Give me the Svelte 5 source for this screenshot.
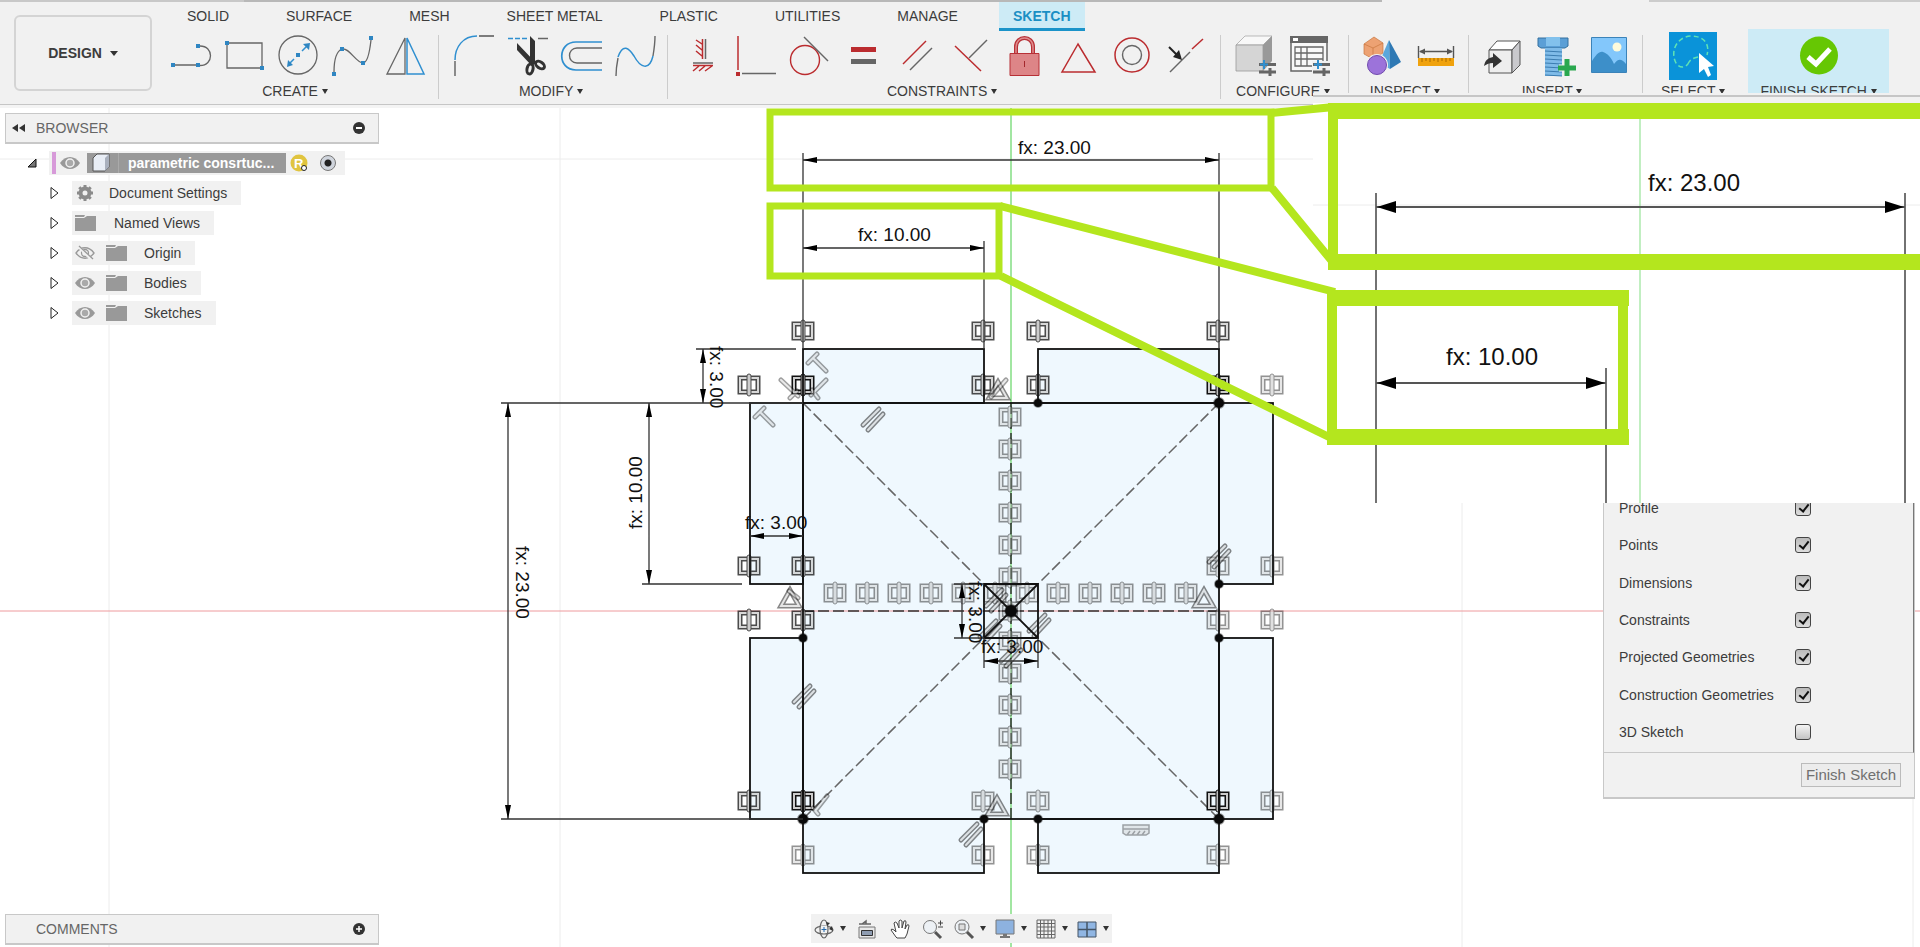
<script lang="ts">
    type Row = { label: string; icon: string; eye?: string };
    type Arrow = { x: number; y: number; r: number };

    const tabs = ["SOLID", "SURFACE", "MESH", "SHEET METAL", "PLASTIC", "UTILITIES", "MANAGE", "SKETCH"];

    const groups = [
        { label: "CREATE", kind: "", tools: ["line", "rectangle", "circle", "spline", "mirror"] },
        { label: "MODIFY", kind: "", tools: ["fillet", "trim", "offset", "curve"] },
        { label: "CONSTRAINTS", kind: "", tools: ["fix", "perpendicular", "tangent", "equal", "parallel", "collinear", "lock", "polygon", "concentric", "midpoint"] },
        { label: "CONFIGURE", kind: "roomy", tools: ["configure", "table"] },
        { label: "INSPECT", kind: "small", tools: ["shapes", "measure"] },
        { label: "INSERT", kind: "small", tools: ["derive", "bolt", "image"] },
        { label: "SELECT", kind: "select", tools: ["select"] },
        { label: "FINISH SKETCH", kind: "finish", tools: ["finish"] }
    ];

    const rows: Row[] = [
        { label: "Document Settings", icon: "gear" },
        { label: "Named Views", icon: "folder" },
        { label: "Origin", icon: "folder", eye: "hidden" },
        { label: "Bodies", icon: "folder", eye: "eye" },
        { label: "Sketches", icon: "folder", eye: "eye" }
    ];

    let options = $state([
        { label: "Profile", on: true },
        { label: "Points", on: true },
        { label: "Dimensions", on: true },
        { label: "Constraints", on: true },
        { label: "Projected Geometries", on: true },
        { label: "Construction Geometries", on: true },
        { label: "3D Sketch", on: false }
    ]);

    const nav = [
        { name: "orbit", label: "Orbit", menu: true },
        { name: "look", label: "Look At", menu: false },
        { name: "pan", label: "Pan", menu: false },
        { name: "zoom", label: "Zoom", menu: false },
        { name: "window", label: "Zoom Window", menu: true },
        { name: "display", label: "Display Settings", menu: true },
        { name: "grid", label: "Grid and Snaps", menu: true },
        { name: "panes", label: "Viewports", menu: true }
    ];

    const tools: Record<string, string> = {
        line: `<path d="M2 30H27M29 30.500C43 30.500 43 11 29 11" fill="none" stroke="#666" stroke-width="1.300"/><path d="M0 28h4v4h-4zM25 28h4v4h-4zM25 9h4v4h-4z" fill="#2f86c2"/>`,
        rectangle: `<path d="M2 8H37V33H2z" fill="none" stroke="#666" stroke-width="1.300"/><path d="M0 6h4v4h-4zM35 31h4v4h-4z" fill="#2f86c2"/>`,
        circle: `<circle cx="19" cy="20" r="19" fill="none" stroke="#666" stroke-width="1.300"/><path d="M10 29L15 24M23 16L28 11" stroke="#2f8fd0" stroke-width="1.500"/><path d="M8 32l1-7 5 5zM31 8l-1 7-6-6zM17 18h4v4h-4z" fill="#2f86c2"/>`,
        spline: `<path d="M1 37C1 24 4 16 9 14C16 12 23 28 30 28C35 28 37 14 38 5" fill="none" stroke="#666" stroke-width="1.300"/><path d="M-1 37h4v4h-4zM7 12h4v4h-4zM28 26h4v4h-4zM36 1h4v4h-4z" fill="#2f86c2"/>`,
        mirror: `<path d="M0 39L18 3V39z" fill="none" stroke="#666" stroke-width="1.300"/><path d="M20 3L37 39H20z" fill="none" stroke="#2f8fd0" stroke-width="1.500"/>`,
        fillet: `<path d="M1 25C1 12 9 1 23 1" fill="none" stroke="#2f8fd0" stroke-width="1.500"/><path d="M1 26V41M25 1H40" stroke="#555" stroke-width="1.300"/>`,
        trim: `<path d="M0 3.500H20" stroke="#2f8fd0" stroke-width="1.500" stroke-dasharray="5 2"/><path d="M30 3.500H40" stroke="#666" stroke-width="1.500"/><path d="M9 8L28 28L24 31L9 15zM22 1L27 6V29L22 25z" fill="#333"/><ellipse cx="22" cy="34" rx="3" ry="5" fill="none" stroke="#333" stroke-width="3" transform="rotate(12 22 34)"/><ellipse cx="32" cy="30" rx="5" ry="3" fill="none" stroke="#333" stroke-width="3" transform="rotate(35 32 30)"/>`,
        offset: `<path d="M40 7H14C-5 7-5 35 14 35H40" fill="none" stroke="#2f8fd0" stroke-width="1.700"/><path d="M40 13H15C5 13 5 28 15 28H40" fill="none" stroke="#666" stroke-width="1.400"/>`,
        curve: `<path d="M0 41C0 34 1 28 2 23M37 21C38 15 39 8 39 1" fill="none" stroke="#666" stroke-width="1.400"/><path d="M2 22C7 8 13 13 18 21C24 32 33 37 37 21" fill="none" stroke="#2f8fd0" stroke-width="1.500"/>`,
        fix: `<path d="M10 28H30M22.500 4V24" stroke="#666" stroke-width="1.500"/><path d="M10 30.500H30M19.500 4V24M19 9L13 5M19 15L13 10M19 21L13 16M16 31L10 36M22 31L16 36M29 31L22 36" stroke="#bb2c2f" stroke-width="1.500"/>`,
        perpendicular: `<path d="M1 1V35" stroke="#bb2c2f" stroke-width="1.500"/><path d="M5 38.500H39" stroke="#666" stroke-width="1.500"/><path d="M-1 37h4v4h-4z" fill="#bb2c2f"/>`,
        tangent: `<circle cx="14" cy="25" r="14.500" fill="none" stroke="#bb2c2f" stroke-width="1.400"/><path d="M13 2L37 26" stroke="#666" stroke-width="1.400"/>`,
        equal: `<path d="M6 12h25v5h-25z" fill="#bb2c2f"/><path d="M6 24h25v5h-25z" fill="#666"/>`,
        parallel: `<path d="M4 29L27 6" stroke="#bb2c2f" stroke-width="1.400"/><path d="M11 35L33 13" stroke="#666" stroke-width="1.400"/>`,
        collinear: `<path d="M2 11L28 36" stroke="#bb2c2f" stroke-width="1.500"/><path d="M16 23L34 5" stroke="#666" stroke-width="1.400"/>`,
        lock: `<path d="M9 18V12C9 0 26 0 26 12V18" fill="none" stroke="#b73036" stroke-width="4"/><path d="M9 18V12C9 0 26 0 26 12V18" fill="none" stroke="#df8c8e" stroke-width="1.500"/><path d="M3 18.500h29v22h-29z" fill="#dd8587" stroke="#b73036"/><path d="M17.500 26v6" stroke="#a3272c"/>`,
        polygon: `<path d="M17 9L1 37H34z" fill="none" stroke="#bb2c2f" stroke-width="1.500"/>`,
        concentric: `<circle cx="17" cy="20" r="17" fill="none" stroke="#bb2c2f" stroke-width="1.500"/><circle cx="17" cy="20" r="9.500" fill="none" stroke="#666" stroke-width="1.400"/>`,
        midpoint: `<path d="M1 37L21 17" stroke="#666" stroke-width="1.400"/><path d="M23 14L34 4" stroke="#bb2c2f" stroke-width="1.500"/><path d="M0 12L8 20" stroke="#222" stroke-width="2"/><path d="M13 25L10 15L4 22z" fill="#222"/>`,
        configure: `<path d="M0 10L9 1H36L27 10z" fill="#f8f8f8" stroke="#aaa" stroke-width=".800"/><path d="M0 10H27V36H0z" fill="#d5d5d5" stroke="#999" stroke-width=".800"/><path d="M27 10L36 1V26L27 36z" fill="#999"/><path d="M23 29.500H40M23 37H40M34 33V41" stroke="#666" stroke-width="3"/><path d="M28 25V34M24 29.500H32" stroke="#2f8fd0" stroke-width="2"/>`,
        table: `<path d="M1 2H37V36H1z" fill="#f8f8f8" stroke="#666" stroke-width="1.500"/><path d="M0 1h38v7h-38z" fill="#666"/><path d="M3 3h5v3h-5z" fill="#fff"/><path d="M5 12H33V31H5zM5 18H33M5 24H33M11 12V31M17 12V31" fill="none" stroke="#666" stroke-width="1.300"/><path d="M22 26h19v14h-19z" fill="#f1f1f1"/><path d="M23 29.500H40M23 37H40M34 33V41" stroke="#666" stroke-width="3"/><path d="M28 25V34M24 29.500H32" stroke="#2f8fd0" stroke-width="2"/>`,
        shapes: `<path d="M2 9L12 2L21 8V18L11 24L2 19z" fill="#eda273" stroke="#c9773f" stroke-width=".700"/><path d="M2 9L11 13L21 8M11 13V24" fill="none" stroke="#c9773f" stroke-width=".700"/><path d="M27 5L17 28L28 34z" fill="#5ba7dc"/><path d="M27 5L39 27L28 34z" fill="#2f79b4"/><circle cx="15" cy="30" r="11" fill="#f1f1f1"/><circle cx="15" cy="30" r="9.500" fill="#9c73da" stroke="#714bad"/>`,
        measure: `<path d="M2.500 11V23M37.500 11V23M4 16.500H36" stroke="#555" stroke-width="1.400"/><path d="M3 16.500l6-3v6zM37 16.500l-6-3v6z" fill="#555"/><path d="M2 23h36v8h-36z" fill="#f0a20d"/><path d="M6 23v4M10 23v3M14 23v4M18 23v3M22 23v4M26 23v3M30 23v4M34 23v3" stroke="#a96a00"/>`,
        derive: `<path d="M7 15L15 6H38L30 15z" fill="#fff" stroke="#555" stroke-width="1"/><path d="M7 15H30V38H7z" fill="#eee" stroke="#555"/><path d="M30 15L38 6V30L30 38z" fill="#c9c9cd" stroke="#555"/><path d="M2 31C3 25 6 23 11 22V18L20 26L11 33V28C7 28 5 29 2 31z" fill="#333"/>`,
        bolt: `<path d="M2 3h30v8l-3 2h-24l-3-2z" fill="#5b9fd6" stroke="#34719f"/><path d="M10 2h14v9h-14z" fill="#82c1ec"/><path d="M9 13h17v28h-17z" fill="#7fbbe8"/><path d="M9 16l17 1M9 20l17 1M9 24l17 1M9 28l17 1M9 32l17 1M9 36l17 1M9 40l17 1" stroke="#3b7cb0"/><path d="M31 25V41M23 33H39" stroke="#f1f1f1" stroke-width="7"/><path d="M31 24V41M22 33H40" stroke="#2aa84f" stroke-width="5"/>`,
        image: `<path d="M1.500 2.500h35v35h-35z" fill="#83c7fb" stroke="#3b83b9"/><circle cx="27" cy="12" r="4.500" fill="#fdfbdc"/><path d="M2 26C6 20 9 16 13 17C18 19 21 22 24 29C28 24 31 23 36 29V37H2z" fill="#3d8fc9"/>`,
        select: `<path d="M-4-3h48v48h-48z" fill="#0a93d9"/><path d="M16 27C13 34 6 33 3 28C-3 17 3 2 18 1C31 1 37 9 34 20M25 22C21 23 18 24 16 27" fill="none" stroke="#5fe3b4" stroke-width="1.500" stroke-dasharray="5 3"/><path d="M26 18L26 38L31 34L35 42L38 40L35 32L41 31z" fill="#fff"/>`,
        finish: `<circle cx="20" cy="20.500" r="19" fill="#66c703"/><path d="M9 22L17 29L31 14" fill="none" stroke="#fff" stroke-width="5"/>`
    };

    const small: Record<string, string> = {
        gear: `<circle cx="10" cy="10" r="4.500" fill="none" stroke="#8b8b8b" stroke-width="4"/><path d="M10 2V4M10 16V18M2 10H4M16 10H18M4.300 4.300L6 6M14 14L15.700 15.700M4.300 15.700L6 14M14 6L15.700 4.300" stroke="#8b8b8b" stroke-width="3"/>`,
        folder: `<path d="M0 2h10l-1 2h-9zM0 5h9l3-2h9v15h-21z" fill="#999"/>`,
        eye: `<path d="M0 10C5 2 15 2 20 10C15 18 5 18 0 10z" fill="#999"/><circle cx="10" cy="10" r="4" fill="#aaa" stroke="#f1f1f1" stroke-width="1.500"/>`,
        hidden: `<path d="M1 10C6 3 14 3 19 10C14 17 6 17 1 10z" fill="none" stroke="#999" stroke-width="1.300"/><circle cx="10" cy="10" r="3.500" fill="none" stroke="#999" stroke-width="1.300"/><path d="M4 4L17 17" stroke="#f1f1f1" stroke-width="3"/><path d="M4 3L18 16" stroke="#999" stroke-width="1.300"/>`,
        orbit: `<g fill="none" stroke="#666" stroke-width="1.200"><ellipse cx="10" cy="10" rx="4" ry="9"/><ellipse cx="10" cy="11" rx="9" ry="4"/></g><path d="M7 7h6v7h-6z" fill="#f1f1f1"/><path d="M10 8v5M7.500 10.500h5" stroke="#256bb0"/><path d="M12 3l4 1-3 3zM18 7l1 5-4-2z" fill="#333"/>`,
        look: `<path d="M2 8h16v11h-16z" fill="#e9e9e9" stroke="#777"/><path d="M4.500 11.500h11v5h-11z" fill="#8f9db2" stroke="#333"/><path d="M2 5h12M5 5l4-3v3" fill="none" stroke="#666" stroke-width="1.500"/>`,
        pan: `<path d="M6 18L1 11Q1 9 4 11L6 13L4 4Q5 2 7 4L9 9V2Q10 0 12 2L12 9L14 2Q16 1 16 3L15 10L17 6Q19 5 19 7L17 15L15 19H7z" fill="#fff" stroke="#444"/>`,
        zoom: `<circle cx="7" cy="8" r="6.500" fill="#edf1f5" stroke="#777"/><path d="M12 13L18 19" stroke="#555" stroke-width="3"/><path d="M15 4h5M17.500 1.500v5M15 8h5" stroke="#444"/>`,
        window: `<circle cx="8" cy="8" r="7" fill="#edf1f5" stroke="#777"/><path d="M5 5h6v6h-6z" fill="#ddd" stroke="#777"/><path d="M13 13L19 19" stroke="#555" stroke-width="3"/>`,
        display: `<path d="M1 1h18v14h-18z" fill="#8db2df" stroke="#777"/><path d="M8 15h4v2h3v2h-10v-2h3z" fill="#777"/>`,
        grid: `<path d="M1 1h18v18h-18zM4.500 1v18M8 1v18M12 1v18M15.500 1v18M1 4.500h18M1 8h18M1 12h18M1 15.500h18" fill="none" stroke="#666"/>`,
        panes: `<path d="M1 3h18v15h-18z" fill="#90b6e3" stroke="#456"/><path d="M10 3v15M1 10.500h18" stroke="#456" stroke-width="1.500"/>`
    };

    // closed profiles, as x, y, width, height
    const profiles = [
        [803, 349, 181, 54], [1038, 349, 181, 54],
        [803, 819, 181, 54], [1038, 819, 181, 54],
        [750, 403, 53, 181], [750, 638, 53, 181],
        [1219, 403, 54, 181], [1219, 638, 54, 181],
        [803, 403, 416, 416]
    ];

    const soft = 0.45;
    const medium = 0.75;
    const column = [417, 449, 481, 513, 545, 577, 641, 673, 705, 737, 769];
    const line = [835, 867, 899, 931, 963, 995, 1027, 1058, 1090, 1122, 1154, 1186];

    // coincident markers, as x, y, opacity
    const markers = [
        [803, 331, medium], [983, 331, medium], [1038, 331, medium], [1218, 331, medium],
        [749, 385, medium], [803, 385, 1], [983, 385, medium], [1038, 385, medium], [1218, 385, 1], [1272, 385, soft],
        [749, 566, medium], [803, 566, medium], [1218, 566, soft], [1272, 566, soft],
        [749, 620, medium], [803, 620, medium], [1218, 620, soft], [1272, 620, soft],
        [749, 801, medium], [803, 801, 1], [983, 801, soft], [1038, 801, soft], [1218, 801, 1], [1272, 801, soft],
        [803, 855, soft], [983, 855, soft], [1038, 855, soft], [1218, 855, soft],
        ...column.map((y) => [1010, y, soft]),
        ...line.map((x) => [x, 593, soft]),
        [1010, 611, soft]
    ];

    const parallels = [[872, 419], [803, 696], [970, 834], [1218, 556], [1038, 625], [989, 631], [1010, 655], [995, 600]];
    const triangles = [[998, 390], [790, 598], [1204, 598], [997, 806]];
    const points = [
        [1038, 403, 4], [1219, 403, 5], [1219, 584, 4], [1219, 638, 4], [803, 638, 4],
        [803, 819, 5], [984, 819, 4], [1038, 819, 4], [1219, 819, 5], [1011, 611, 6]
    ];

    const glyphs = "M808 363L817 354M813 358L826 371M755 417L764 408M760 412L773 425M781 380L798 396M790 398L797 391M826 380L811 395M812 390L818 398M991 397L1006 380M789 591L798 598M816 810L827 796M813 808L818 814";

    const dims = [
        "M803 153V349M1219 153V349M803 160H1219",
        "M984 241V349M803 248H984",
        "M696 349H796M703 349V403",
        "M501 403H803M501 819H803M508 403V819",
        "M642 584H742M649 403V584",
        "M750 536H803",
        "M954 584H984M954 638H984M962 584V638",
        "M984 638V668M1038 638V668M984 661H1038"
    ].join("");

    // each tip points to the left before it is turned
    const arrows: Arrow[] = [
        { x: 803, y: 160, r: 0 }, { x: 1219, y: 160, r: 180 },
        { x: 803, y: 248, r: 0 }, { x: 984, y: 248, r: 180 },
        { x: 703, y: 349, r: 90 }, { x: 703, y: 403, r: 270 },
        { x: 508, y: 403, r: 90 }, { x: 508, y: 819, r: 270 },
        { x: 649, y: 403, r: 90 }, { x: 649, y: 584, r: 270 },
        { x: 750, y: 536, r: 0 }, { x: 803, y: 536, r: 180 },
        { x: 962, y: 584, r: 90 }, { x: 962, y: 638, r: 270 },
        { x: 984, y: 661, r: 0 }, { x: 1038, y: 661, r: 180 }
    ];

    const labels = [
        { x: 1018, y: 154, r: 0, text: "fx: 23.00" },
        { x: 858, y: 241, r: 0, text: "fx: 10.00" },
        { x: 710, y: 346, r: 90, text: "fx: 3.00" },
        { x: 516, y: 546, r: 90, text: "fx: 23.00" },
        { x: 642, y: 529, r: -90, text: "fx: 10.00" },
        { x: 745, y: 529, r: 0, text: "fx: 3.00" },
        { x: 969, y: 581, r: 90, text: "fx: 3.00" },
        { x: 981, y: 653, r: 0, text: "fx: 3.00" }
    ];
</script>

<div class="app">
    <svg class="canvas" viewBox="0 0 1920 947" preserveAspectRatio="xMinYMin slice" role="img" aria-label="Sketch">
        <path class="gridline" d="M109 108V947M560 108V947M1462 503V947M1913 503V947M0 159H1313"/>
        {#each profiles as [x, y, w, h]}
            <rect {x} {y} width={w} height={h} fill="#eff8fe"/>
        {/each}
        <path d="M0 611H1920" stroke="#ee9a9d"/>
        <path d="M1011 108V947" stroke="#83de83" stroke-width="1.500"/>
        <path class="construction" d="M803 403L984 584M1219 403L1038 584M803 819L984 638M1219 819L1038 638"/>
        <path class="construction axis" d="M803 611H1219M1011 403V819"/>

        {#each markers as [x, y, opacity]}
            <g transform="translate({x} {y})" {opacity}>
                <path class="outer" d="M-1-7H-9V7H-1M1-7H9V7H1"/>
                <path class="inner" d="M-1-7H-9V7H-1M1-7H9V7H1"/>
                <rect x="-2" y="-11" width="4" height="22" rx="2" fill="#bbb" stroke="#111"/>
            </g>
        {/each}
        {#each parallels as [x, y]}
            <g transform="translate({x} {y})" opacity="0.500">
                <path class="outer" d="M-9 6L7-10M-4 11L11-5"/>
                <path class="inner" d="M-9 6L7-10M-4 11L11-5"/>
            </g>
        {/each}
        {#each triangles as [x, y]}
            <g transform="translate({x} {y})" opacity="0.500">
                <path class="outer" d="M0-8L-9 8H9z"/>
                <path class="inner" d="M0-8L-9 8H9z"/>
            </g>
        {/each}
        <g opacity="0.400">
            <path class="outer" d={glyphs}/>
            <path class="inner" d={glyphs}/>
            <path d="M1123 825h26v8l-3 2h-20l-3-2zM1123 829h26M1127 835l3-4M1132 835l3-4M1137 835l3-4M1142 835l3-4" fill="#ccc" stroke="#222" stroke-width="1.500"/>
        </g>

        {#each profiles as [x, y, w, h]}
            <rect {x} {y} width={w} height={h} fill="none" stroke="#111" stroke-width="1.800"/>
        {/each}
        <path d="M984 584H1038V638H984zL1038 638M1038 584L984 638" fill="none" stroke="#111" stroke-width="1.800"/>
        {#each points as [x, y, r]}
            <circle cx={x} cy={y} r={r} fill="#0a0a0a" stroke="#111" stroke-opacity="0.400" stroke-width="2"/>
        {/each}
        <path d={dims} fill="none" stroke="#333" stroke-width="1.300"/>
        {#each arrows as a}
            <path d="M0 0L14-3V3z" transform="translate({a.x} {a.y}) rotate({a.r})"/>
        {/each}
        {#each labels as l}
            <text class="dim" transform="translate({l.x} {l.y}) rotate({l.r})">{l.text}</text>
        {/each}
    </svg>

    <header>
        <button class="workspace">DESIGN <span class="caret"></span></button>
        <div class="ribbon">
            <nav class="tabs">
                {#each tabs as tab}
                    <button class="tab" class:active={tab === "SKETCH"}>{tab}</button>
                {/each}
            </nav>
            <div class="groups">
                {#each groups as group}
                    <section class="group {group.kind}">
                        <div class="tools">
                            {#each group.tools as name}
                                <button class="tool" aria-label={name}>
                                    <svg viewBox="0 0 40 40" width="40" height="40">{@html tools[name]}</svg>
                                </button>
                            {/each}
                        </div>
                        <button class="menu">{group.label} <span class="caret"></span></button>
                    </section>
                {/each}
            </div>
        </div>
    </header>

    <main>
        <aside>
            <div class="bar">
                <svg width="14" height="10" viewBox="0 0 14 10"><path d="M0 5L6 1V9zM7 5L13 1V9z" fill="#333"/></svg>
                <span class="title">BROWSER</span>
                <button class="round" aria-label="Collapse browser">
                    <svg width="12" height="12" viewBox="0 0 12 12"><circle cx="6" cy="6" r="6" fill="#333"/><path d="M3 6H9" stroke="#fff" stroke-width="2"/></svg>
                </button>
            </div>
            <ul class="tree">
                <li class="root">
                    <svg width="10" height="10" viewBox="0 0 10 10"><path d="M9 1V9H1z" fill="#777" stroke="#111"/></svg>
                    <div class="chip document">
                        <span class="mark"></span>
                        <svg width="20" height="20" viewBox="0 0 20 20">{@html small.eye}</svg>
                        <span class="name">
                            <svg width="32" height="20" viewBox="0 0 32 20"><path d="M6 5L10 1H22V14L18 18H6z" fill="#e8edf5" stroke="#555"/><path d="M18 5L22 1V14L18 18z" fill="#a9b0bd"/><path d="M31.500 0V20" stroke="#aaa"/></svg>
                            <b>parametric consrtuc...</b>
                        </span>
                        <svg class="badge" width="18" height="20" viewBox="0 0 18 20"><circle cx="9" cy="10" r="8.500" fill="#e0c43f"/><text x="4" y="15" font-size="13" font-weight="bold" fill="#fff">R</text><circle cx="14" cy="15" r="2.500" fill="#fff" stroke="#222"/></svg>
                        <input type="radio" name="active" checked aria-label="Activate component"/>
                    </div>
                </li>
                {#each rows as row}
                    <li>
                        <svg width="10" height="14" viewBox="0 0 10 14"><path d="M1 1.500L8 7L1 12.500z" fill="#fff" stroke="#222"/></svg>
                        <div class="chip" class:visibility={row.eye}>
                            {#if row.eye}
                                <svg width="20" height="20" viewBox="0 0 20 20">{@html small[row.eye]}</svg>
                            {/if}
                            <svg class={row.icon} width="21" height="20" viewBox="0 0 21 20">{@html small[row.icon]}</svg>
                            <span>{row.label}</span>
                        </div>
                    </li>
                {/each}
            </ul>
        </aside>

        <section class="palette">
            <div class="options">
                <div class="list">
                    {#each options as option}
                        <label>
                            <span>{option.label}</span>
                            <input type="checkbox" bind:checked={option.on}/>
                        </label>
                    {/each}
                </div>
            </div>
            <div class="actions">
                <button>Finish Sketch</button>
            </div>
        </section>
    </main>

    <footer>
        <div class="bar">
            <span class="title">COMMENTS</span>
            <button class="round" aria-label="Expand comments">
                <svg width="12" height="12" viewBox="0 0 12 12"><circle cx="6" cy="6" r="6" fill="#333"/><path d="M3 6H9M6 3V9" stroke="#fff" stroke-width="1.500"/></svg>
            </button>
        </div>
        <div class="navbar">
            {#each nav as item}
                <button class:plain={!item.menu} aria-label={item.label}>
                    <svg width="20" height="20" viewBox="0 0 20 20">{@html small[item.name]}</svg>
                    {#if item.menu}<span class="caret"></span>{/if}
                </button>
            {/each}
        </div>
    </footer>

    <!-- enlarged callouts over the sketch -->
    <svg class="callouts" viewBox="0 0 1920 947" preserveAspectRatio="xMinYMin slice" role="img" aria-label="Callouts">
        <path d="M1313 93H1920V103H1313z" fill="#f1f1f1"/>
        <path d="M1313 96H1920" stroke="#c6c6c6" stroke-width="2"/>
        <path d="M1313 103H1920V503H1313z" fill="#fff"/>
        <path class="gridline" d="M1313 205H1920"/>
        <path d="M1640 119V503" stroke="#83de83"/>
        <path d="M1376 193V503M1905 193V503M1606 368V503" stroke="#444" stroke-width="1.500"/>
        <path d="M1376 207H1905M1376 383H1606" stroke="#555" stroke-width="2"/>
        <path d="M1377 207l19-6v12zM1904 207l-19-6v12zM1377 383l19-6v12zM1605 383l-19-6v12z"/>
        <text class="big" x="1648" y="191">fx: 23.00</text>
        <text class="big" x="1446" y="365">fx: 10.00</text>
        <g fill="none" stroke="#b4e61e">
            <path d="M770 112H1271V188H770zM770 206H999V276H770z" stroke-width="7"/>
            <path d="M1271 113L1334 107M1272 188L1331 260M1000 206L1335 292M1001 276L1331 438" stroke-width="8"/>
            <path d="M1328 111H1920M1328 262H1920M1327 298H1629M1327 437H1629" stroke-width="16"/>
            <path d="M1333 104V269M1332 291V444M1623 291V444" stroke-width="10"/>
        </g>
    </svg>
</div>

<style>
    :global(body) {
        margin: 0;
        background: #fff;
    }

    .app {
        position: relative;
        display: flex;
        flex-direction: column;
        min-height: 100vh;
        overflow: hidden;
        font-family: "Liberation Sans", Arial, sans-serif;
        font-size: 14px;
        line-height: 16px;
        color: #3c3c3c;
    }

    .canvas, .callouts {
        position: absolute;
        top: 0;
        left: 0;
        width: 100%;
        height: 100%;
    }

    .callouts {
        pointer-events: none;
    }

    .gridline {
        stroke: #ececec;
        fill: none;
    }

    .construction {
        fill: none;
        stroke: #666;
        stroke-width: 1.5;
        stroke-dasharray: 11 4;
    }

    .axis {
        stroke: #333;
    }

    .outer {
        fill: none;
        stroke: #111;
        stroke-width: 5;
        stroke-linecap: round;
    }

    .inner {
        fill: none;
        stroke: #ccc;
        stroke-width: 2;
        stroke-linecap: round;
    }

    .dim {
        font-size: 19px;
        fill: #111;
    }

    .big {
        font-size: 24px;
        fill: #111;
    }

    button {
        margin: 0;
        padding: 0;
        border: 0;
        background: none;
        font: inherit;
        color: inherit;
        cursor: pointer;
    }

    svg {
        display: block;
        flex: none;
        overflow: visible;
    }

    .caret {
        display: inline-block;
        border: 3px solid transparent;
        border-top: 5px solid #333;
        border-bottom: 0;
        vertical-align: 2px;
    }

    header {
        position: relative;
        display: flex;
        height: 102px;
        padding-top: 2px;
        background: linear-gradient(90deg, #c8c8c8 0 244px, #b8b8b8 244px 1382px, #f1f1f1 1382px 1649px, #ccc 1649px) top / 100% 2px no-repeat #f1f1f1;
        border-bottom: 1px solid #c6c6c6;
        box-shadow: 0 3px #f4f4f4;
    }

    .workspace {
        flex: none;
        width: 138px;
        height: 76px;
        margin: 13px 4px 0 14px;
        border: 2px solid #d4d4d4;
        border-radius: 6px;
        font-weight: bold;
    }

    .workspace .caret {
        margin-left: 4px;
        border-width: 5px 4px 0;
    }

    .ribbon {
        flex: 1;
        min-width: 0;
    }

    .tabs {
        display: flex;
        gap: 25px;
        height: 29px;
        padding-left: 15px;
    }

    .tab {
        flex: none;
        padding: 0 16px 2px;
        white-space: nowrap;
    }

    .tab.active {
        padding: 1px 14px 0;
        border-bottom: 3px solid #1b93c9;
        background: #cdebf6;
        color: #1b8fc4;
        font-weight: bold;
    }

    .groups {
        display: flex;
        padding-top: 4px;
    }

    .group {
        display: flex;
        flex: none;
        flex-direction: column;
        align-items: center;
        gap: 8px;
        height: 64px;
        padding: 0 11px 0 15px;
        border-right: 1px solid #ccc;
    }

    .roomy {
        padding: 0 18px 0 15px;
    }

    .small {
        padding: 0 12px 0 13px;
    }

    .select {
        padding: 0 23px 0 18px;
        border-right: 0;
    }

    .finish {
        width: 141px;
        margin-top: -6px;
        padding: 6px 0 0;
        border-right: 0;
        background: #cdebf6;
    }

    .tools {
        display: flex;
        gap: 14px;
    }

    .menu {
        margin-right: 8px;
        white-space: nowrap;
    }

    .roomy .menu, .select .menu, .finish .menu {
        margin-right: 0;
    }

    main {
        display: flex;
        flex: 1;
        justify-content: space-between;
        align-items: flex-start;
        padding: 8px 5px 0;
    }

    aside {
        position: relative;
    }

    .bar {
        position: relative;
        box-sizing: border-box;
        display: flex;
        align-items: center;
        width: 374px;
        height: 31px;
        padding: 0 13px 0 6px;
        border: 1px solid #c8c8c8;
        border-bottom-width: 2px;
        background: #f1f1f1;
        color: #666;
    }

    .title {
        flex: 1;
        margin-left: 10px;
    }

    footer .title {
        margin-left: 24px;
    }

    .tree {
        display: flex;
        flex-direction: column;
        gap: 6px;
        margin: 7px 0 0;
        padding: 0;
        list-style: none;
    }

    li {
        display: flex;
        align-items: center;
        gap: 12px;
        padding-left: 45px;
    }

    .root {
        padding-left: 22px;
    }

    .chip {
        display: flex;
        align-items: center;
        gap: 18px;
        height: 24px;
        padding: 0 14px 0 3px;
        background: #f1f1f1;
    }

    .chip .gear {
        margin-right: -5px;
    }

    .chip.visibility {
        gap: 11px;
    }

    .visibility span {
        margin-left: 6px;
    }

    .chip.document {
        gap: 4px;
        padding: 0 9px 0 3px;
    }

    .mark {
        width: 4px;
        height: 22px;
        background: #d79ad9;
    }

    .name {
        display: flex;
        align-items: center;
        width: 199px;
        height: 20px;
        margin-left: 3px;
        background: #999;
        color: #fff;
        white-space: nowrap;
    }

    .name b {
        margin-left: 9px;
    }

    .document input {
        appearance: none;
        box-sizing: border-box;
        width: 16px;
        height: 16px;
        margin: 0 0 0 8px;
        border: 1px solid #777;
        border-radius: 50%;
        background: radial-gradient(circle, #222 0 3px, #cfd4dc 4px);
    }

    .palette {
        position: relative;
        width: 310px;
        margin-top: 390px;
        border: 1px solid #c8c8c8;
        border-top: 0;
        border-bottom-width: 2px;
        background: #f1f1f1;
    }

    .options {
        display: flex;
        flex-direction: column;
        justify-content: flex-end;
        height: 248px;
        padding-bottom: 1px;
        overflow: hidden;
        border-right: 1px solid #777;
        border-bottom: 1px solid #c8c8c8;
    }

    .list {
        display: grid;
        flex: none;
        grid-template-rows: repeat(7, 1fr);
        height: 262px;
    }

    label {
        display: flex;
        align-items: center;
        padding-left: 15px;
        line-height: 12px;
    }

    label span {
        width: 176px;
    }

    label input {
        appearance: none;
        box-sizing: border-box;
        width: 16px;
        height: 16px;
        margin: 0;
        border: 1px solid #444;
        border-radius: 3px;
        background: linear-gradient(#f4f4f4, #c4c4c4);
    }

    label input:checked {
        background: linear-gradient(#bbb, #ddd);
    }

    label input:checked::after {
        content: "";
        display: block;
        width: 4px;
        height: 8px;
        margin: 1px 0 0 5px;
        border: solid #111;
        border-width: 0 2px 2px 0;
        transform: rotate(38deg);
    }

    .actions {
        display: flex;
        justify-content: flex-end;
        padding: 10px 13px;
    }

    .actions button {
        height: 24px;
        padding: 0 4px;
        border: 1px solid #bbb;
        background: #ececec;
        color: #707070;
        font-size: 15px;
    }

    footer {
        position: relative;
        display: grid;
        grid-template-columns: 1fr auto 1fr;
        align-items: start;
        padding: 0 3px 2px 5px;
    }

    .navbar {
        display: flex;
        align-items: center;
        gap: 9px;
        height: 29px;
        padding: 0 3px;
        background: #f1f1f1;
    }

    .navbar button {
        display: flex;
        align-items: center;
        gap: 6px;
    }

    .navbar .plain {
        padding: 0 2px;
    }
</style>
